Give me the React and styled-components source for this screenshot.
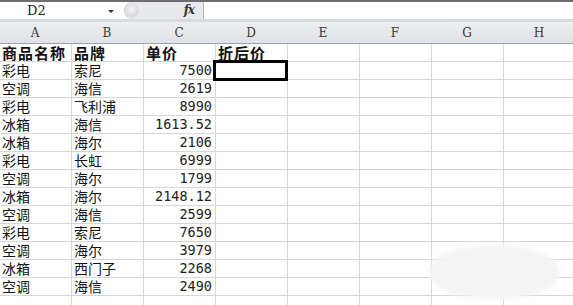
import styled, {createGlobalStyle} from "styled-components";

const GlobalStyle = createGlobalStyle`
  html, body {
    margin: 0;
    padding: 0;
    background: #fff;
    overflow: hidden;
  }

  body {
    font-family: "Noto Sans CJK SC", "Noto Sans", sans-serif;
  }
`

const Page = styled.div`
  width: 573px;
  height: 305px;
  position: relative;
  overflow: hidden;
  background: #fff;
`

const FormulaBar = styled.div`
  display: flex;
  height: 17px;
  border-top: 2px solid #6e6e6e;
  border-bottom: 3px solid #d8dbdf;
  background: #fff;
`

const NameBox = styled.div`
  width: 124px;
  position: relative;
  display: flex;
  align-items: center;
  padding-left: 27px;
  box-sizing: border-box;
  font-family: "DejaVu Serif", "Liberation Serif", serif;
  font-size: 13px;
  line-height: 17px;
  color: #222;

  &::after {
    content: "";
    position: absolute;
    right: 10px;
    top: 8px;
    border-left: 3px solid transparent;
    border-right: 3px solid transparent;
    border-top: 3px solid #333;
  }
`

const GripPanel = styled.div`
  width: 79px;
  display: flex;
  align-items: center;
  justify-content: space-between;
  background: #e7e9ec;
  border-radius: 9px 0 0 9px;
  box-shadow: inset 1px 0 0 #c9ccd0;
`

const Grip = styled.div`
  width: 13px;
  height: 13px;
  margin-left: 2px;
  border-radius: 50%;
  background: radial-gradient(circle at 45% 40%, #f6f6f6 0, #dcdcdc 55%, #c4c4c4 100%);
`

const FxLabel = styled.span`
  font-family: "DejaVu Serif", "Liberation Serif", serif;
  font-style: italic;
  font-weight: bold;
  font-size: 12px;
  line-height: 15px;
  color: #333;
  margin-right: 9px;
  letter-spacing: -1px;
`

const FormulaInput = styled.div`
  flex: 1;
  border-left: 1px solid #b5b9be;
  background: #fff;
`

const Grid = styled.div`
  margin-left: -1px;
`

const Row = styled.div`
  display: grid;
  grid-template-columns: repeat(8, 72px);
`

const HeaderCell = styled.div`
  height: 21px;
  border-bottom: 1px solid #9ea4ab;
  border-right: 1px solid #c3c7cc;
  background: linear-gradient(#eceef1, #dfe2e6);
  display: flex;
  align-items: center;
  justify-content: center;
  font-family: "DejaVu Serif", "Liberation Serif", serif;
  font-size: 12px;
  line-height: 16px;
  color: #3a3a3a;
  margin-right: -1px;
`

const Cell = styled.div`
  height: 17px;
  border-bottom: 1px solid #d6d6d6;
  border-right: 1px solid #d6d6d6;
  margin-right: -1px;
  position: relative;
  padding: 0 3px;
  display: flex;
  align-items: center;
  justify-content: ${props => props.$num ? 'flex-end' : 'flex-start'};
  font-family: ${props => props.$num ? '"DejaVu Sans Mono", monospace' : '"Noto Sans CJK SC", sans-serif'};
  font-size: ${props => props.$bold ? '15px' : props.$num ? '13.5px' : '14px'};
  font-weight: ${props => props.$bold ? 700 : 400};
  letter-spacing: ${props => props.$bold ? '1px' : '0'};
  line-height: 17px;
  color: ${props => props.$num ? '#222' : '#111'};
  white-space: nowrap;

  ${props => props.$selected && `
    &::after {
      content: "";
      position: absolute;
      left: -2px;
      top: -2px;
      right: -1px;
      bottom: -2px;
      border: 3px solid #000;
      z-index: 2;
    }
  `}
`

const Smudge = styled.div`
  position: absolute;
  left: 428px;
  top: 244px;
  width: 132px;
  height: 56px;
  border-radius: 50%;
  background: #f4f4f4;
  filter: blur(2px);
  opacity: 0.95;
`

const columns = ['A', 'B', 'C', 'D', 'E', 'F', 'G', 'H']

const rows = [
  ['彩电', '索尼', '7500'],
  ['空调', '海信', '2619'],
  ['彩电', '飞利浦', '8990'],
  ['冰箱', '海信', '1613.52'],
  ['冰箱', '海尔', '2106'],
  ['彩电', '长虹', '6999'],
  ['空调', '海尔', '1799'],
  ['冰箱', '海尔', '2148.12'],
  ['空调', '海信', '2599'],
  ['彩电', '索尼', '7650'],
  ['空调', '海尔', '3979'],
  ['冰箱', '西门子', '2268'],
  ['空调', '海信', '2490'],
  ['', '', ''],
]

export default function App() {
  return (
    <Page>
      <GlobalStyle/>
      <FormulaBar>
        <NameBox>D2</NameBox>
        <GripPanel>
          <Grip/>
          <FxLabel>fx</FxLabel>
        </GripPanel>
        <FormulaInput/>
      </FormulaBar>
      <Grid>
        <Row>
          {columns.map(c => <HeaderCell key={c}>{c}</HeaderCell>)}
        </Row>
        <Row>
          <Cell $bold>商品名称</Cell>
          <Cell $bold>品牌</Cell>
          <Cell $bold>单价</Cell>
          <Cell $bold>折后价</Cell>
          <Cell/><Cell/><Cell/><Cell/>
        </Row>
        {rows.map((r, i) => (
          <Row key={i}>
            <Cell>{r[0]}</Cell>
            <Cell>{r[1]}</Cell>
            <Cell $num>{r[2]}</Cell>
            <Cell $selected={i === 0}/>
            <Cell/><Cell/><Cell/><Cell/>
          </Row>
        ))}
      </Grid>
      <Smudge/>
    </Page>
  )
}
